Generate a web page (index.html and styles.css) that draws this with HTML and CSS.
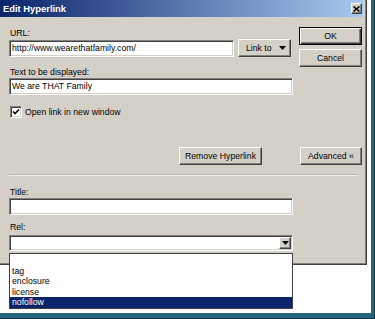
FILE: index.html
```html
<!DOCTYPE html>
<html lang="en">
<head>
    <meta charset="UTF-8">
    <title>Edit Hyperlink</title>
    <link rel="stylesheet" href="styles.css">
</head>
<body>
<div class="frame">
    <div class="dialog">
        <div class="titlebar">
            <span class="title">Edit Hyperlink</span>
            <span class="close">
                <svg width="7" height="6" viewBox="0 0 7 6"><path d="M0.5 0.5 L6.5 5.5 M6.5 0.5 L0.5 5.5" stroke="#000" stroke-width="1.6"/></svg>
            </span>
        </div>

        <div class="content">
            <div class="upper">
                <div class="fields">
                    <label class="lbl lbl-url">URL:</label>
                    <div class="url-row">
                        <div class="input url">http://www.wearethatfamily.com/</div>
                        <div class="btn linkto">
                            <span>Link to</span>
                            <svg width="7" height="4" viewBox="0 0 7 4"><path d="M0 0 H7 L3.5 4 Z" fill="#000"/></svg>
                        </div>
                    </div>
                    <label class="lbl lbl-text">Text to be displayed:</label>
                    <div class="input">We are THAT Family</div>
                    <div class="check-row">
                        <span class="checkbox">
                            <svg width="8" height="8" viewBox="0 0 8 8"><path d="M1 3.5 L3 5.5 L7 1.5" stroke="#000" stroke-width="1.7" fill="none"/></svg>
                        </span>
                        <span>Open link in new window</span>
                    </div>
                </div>
                <div class="side">
                    <div class="btn ok">OK</div>
                    <div class="btn cancel">Cancel</div>
                </div>
            </div>

            <div class="actions">
                <div class="btn remove">Remove Hyperlink</div>
                <div class="btn advanced">Advanced &laquo;</div>
            </div>

            <div class="sep"></div>

            <div class="fields">
                <label class="lbl lbl-title">Title:</label>
                <div class="input"></div>
                <label class="lbl lbl-rel">Rel:</label>
                <div class="input combo">
                    <span class="caret">
                        <svg width="7" height="4" viewBox="0 0 7 4"><path d="M0 0 H7 L3.5 4 Z" fill="#000"/></svg>
                    </span>
                </div>
            </div>
        </div>
    </div>

    <ul class="listbox">
        <li></li>
        <li>tag</li>
        <li>enclosure</li>
        <li>license</li>
        <li class="selected">nofollow</li>
    </ul>
</div>
</body>
</html>
```

FILE: styles.css
```css
body {
    margin: 0;
    background: #fff;
    font-family: "Liberation Sans", Arial, sans-serif;
    font-size: 8.7px;
    color: #000;
}

.frame {
    position: relative;
    width: 375px;
    height: 319px;
    background: #fff;
    box-shadow: inset -1px -1px 0 #0f3a48, inset -4px -6px 0 #23667e;
    overflow: hidden;
}

.dialog {
    width: 366px;
    height: 264px;
    background: #d4d0c8;
    border-right: 1px solid #404040;
    border-bottom: 1px solid #404040;
    box-shadow: inset -1px -1px 0 #808080;
}

.titlebar {
    box-sizing: border-box;
    width: 363px;
    height: 17px;
    padding: 0 1px 0 3px;
    background: linear-gradient(to right, #0a246a, #a6caf0);
    display: flex;
    align-items: center;
    justify-content: space-between;
    color: #fff;
    font-weight: bold;
    font-size: 9.4px;
}

.close {
    box-sizing: border-box;
    width: 11px;
    height: 11px;
    background: #d4d0c8;
    border: 1px solid;
    border-color: #fff #404040 #404040 #fff;
    box-shadow: inset -1px -1px 0 #808080;
    display: flex;
    align-items: center;
    justify-content: center;
}

.content {
    padding-left: 9px;
}

.upper {
    display: flex;
}

.fields {
    width: 284px;
}

.lbl {
    display: block;
    line-height: 11px;
    padding-left: 1px;
}

.lbl-url {
    margin-top: 11px;
}

.lbl-text {
    margin-top: 10px;
}

.lbl-title {
    margin-top: 11px;
}

.lbl-rel {
    margin-top: 7px;
}

.input {
    box-sizing: border-box;
    height: 17px;
    padding: 0 2px;
    background: #fff;
    border: 1px solid;
    border-color: #808080 #fff #fff #808080;
    box-shadow: inset 1px 1px 0 #404040, inset -1px -1px 0 #d4d0c8;
    line-height: 15px;
    white-space: nowrap;
}

.url-row {
    display: flex;
    align-items: flex-start;
}

.url {
    width: 225px;
    margin-top: 1px;
}

.btn {
    box-sizing: border-box;
    height: 18px;
    background: #d4d0c8;
    border: 1px solid;
    border-color: #fff #404040 #404040 #fff;
    box-shadow: inset -1px -1px 0 #808080;
    display: flex;
    align-items: center;
    justify-content: center;
    white-space: nowrap;
}

.linkto {
    width: 53px;
    margin-left: 4px;
    justify-content: space-between;
    padding: 0 4px 0 7px;
}

.check-row {
    display: flex;
    align-items: center;
    margin-top: 11px;
    padding-left: 1px;
    height: 12px;
}

.checkbox {
    box-sizing: border-box;
    width: 12px;
    height: 12px;
    margin-right: 3px;
    background: #fff;
    border: 1px solid;
    border-color: #808080 #fff #fff #808080;
    box-shadow: inset 1px 1px 0 #404040, inset -1px -1px 0 #d4d0c8;
    display: flex;
    align-items: center;
    justify-content: center;
}

.side {
    width: 63px;
    margin-left: 6px;
}

.ok {
    margin-top: 10px;
    border-color: #000;
    box-shadow: inset 1px 1px 0 #fff, inset -1px -1px 0 #404040, inset -2px -2px 0 #808080;
}

.cancel {
    margin-top: 4px;
}

.actions {
    display: flex;
    margin-top: 29px;
}

.remove {
    width: 83px;
    margin-left: 170px;
}

.advanced {
    width: 62px;
    margin-left: 38px;
}

.sep {
    width: 349px;
    height: 1px;
    margin-top: 9px;
    background: #bab6ae;
    border-bottom: 1px solid #eeece8;
}

.combo {
    height: 16px;
    margin-top: 2px;
    display: flex;
    justify-content: flex-end;
    align-items: center;
    padding-right: 1px;
}

.caret {
    box-sizing: border-box;
    width: 12px;
    height: 12px;
    background: #d4d0c8;
    border: 1px solid;
    border-color: #fff #404040 #404040 #fff;
    box-shadow: inset -1px -1px 0 #808080;
    display: flex;
    align-items: center;
    justify-content: center;
}

.listbox {
    position: absolute;
    left: 9px;
    top: 253px;
    box-sizing: border-box;
    width: 284px;
    margin: 0;
    padding: 1px 0 0;
    list-style: none;
    background: #fff;
    border: 1px solid #404040;
}

.listbox li {
    height: 10.5px;
    line-height: 10.5px;
    padding-left: 2px;
}

.listbox .selected {
    background: #0a246a;
    color: #fff;
}
```
